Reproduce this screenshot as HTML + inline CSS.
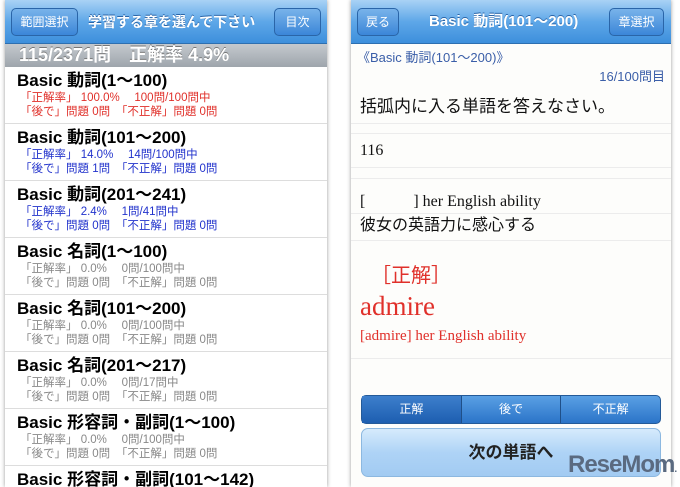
<!DOCTYPE html><html><head><meta charset="utf-8"><style>
*{margin:0;padding:0;box-sizing:border-box}
body{width:680px;height:487px;background:#fff;position:relative;overflow:hidden;font-family:"Liberation Sans","Noto Sans CJK JP",sans-serif}
.p{position:absolute;top:0;height:487px;background:#fff;overflow:hidden;box-shadow:0 0 4px #999}
.hd{position:absolute;left:0;right:0;top:0;height:44px;background:linear-gradient(#a9d2f5,#5ea7e8 50%,#3d8fdc);border-bottom:1px solid #2d6fb0}
.btn{position:absolute;top:8px;height:28px;border:1px solid #2a65a8;border-radius:5px;background:linear-gradient(#78b3ea,#3b86d8);color:#fff;font-size:12px;line-height:26px;text-align:center}
.ht{position:absolute;top:0;line-height:44px;color:#fff;font-weight:bold;font-size:15px;text-shadow:0 -1px 0 #2a65a8}
.st{position:absolute;left:0;right:0;top:44px;height:23px;background:linear-gradient(#c4c9ce,#9ea5ac);color:#fff;font-weight:bold;font-size:18px;line-height:23px;padding-left:14px;text-shadow:0 -1px #777}
.r{position:absolute;left:0;right:0;height:57px;border-bottom:1px solid #ddd;padding-left:12px;overflow:hidden}
.r b{display:block;font-size:17px;margin-top:3px;line-height:21px;color:#000}
.r i{display:block;font-style:normal;font-size:11.5px;line-height:14px;padding-left:3px;white-space:nowrap}
.red{color:#e0302a}.blu{color:#2233cc}.gr{color:#888}
.ln{position:absolute;left:0;right:0;border-top:1px solid #ececec}
.ser{font-family:"Liberation Serif","Noto Serif CJK SC",serif}
</style></head><body>
<div class="p" style="left:5px;width:322px">
<div class="hd"></div>
<div class="btn" style="left:6px;width:67px">範囲選択</div>
<div class="ht" style="left:83px;font-size:14px">学習する章を選んで下さい</div>
<div class="btn" style="left:269px;width:47px">目次</div>
<div class="st">115/2371問　正解率 4.9%</div>
<div class="r" style="top:67px"><b>Basic 動詞(1〜100)</b><i class="red">「正解率」 100.0%　 100問/100問中</i><i class="red">「後で」問題 0問　「不正解」問題 0問</i></div>
<div class="r" style="top:124px"><b>Basic 動詞(101〜200)</b><i class="blu">「正解率」 14.0%　 14問/100問中</i><i class="blu">「後で」問題 1問　「不正解」問題 0問</i></div>
<div class="r" style="top:181px"><b>Basic 動詞(201〜241)</b><i class="blu">「正解率」 2.4%　 1問/41問中</i><i class="blu">「後で」問題 0問　「不正解」問題 0問</i></div>
<div class="r" style="top:238px"><b>Basic 名詞(1〜100)</b><i class="gr">「正解率」 0.0%　 0問/100問中</i><i class="gr">「後で」問題 0問　「不正解」問題 0問</i></div>
<div class="r" style="top:295px"><b>Basic 名詞(101〜200)</b><i class="gr">「正解率」 0.0%　 0問/100問中</i><i class="gr">「後で」問題 0問　「不正解」問題 0問</i></div>
<div class="r" style="top:352px"><b>Basic 名詞(201〜217)</b><i class="gr">「正解率」 0.0%　 0問/17問中</i><i class="gr">「後で」問題 0問　「不正解」問題 0問</i></div>
<div class="r" style="top:409px"><b>Basic 形容詞・副詞(1〜100)</b><i class="gr">「正解率」 0.0%　 0問/100問中</i><i class="gr">「後で」問題 0問　「不正解」問題 0問</i></div>
<div class="r" style="top:466px"><b>Basic 形容詞・副詞(101〜142)</b></div>
</div>
<div class="p" style="left:351px;width:320px;background:#fdfdfb">
<div class="hd"></div>
<div class="btn" style="left:6px;width:42px">戻る</div>
<div class="ht" style="left:78px">Basic 動詞(101〜200)</div>
<div class="btn" style="left:258px;width:55px">章選択</div>
<div style="position:absolute;left:6px;top:47px;font-size:13px;color:#3a5ea8">《Basic 動詞(101〜200)》</div>
<div style="position:absolute;right:6px;top:66px;font-size:13px;color:#3a5ea8">16/100問目</div>
<div class="ln" style="top:123px"></div><div class="ln" style="top:133px"></div><div class="ln" style="top:167px"></div><div class="ln" style="top:178px"></div><div class="ln" style="top:213px"></div><div class="ln" style="top:240px"></div><div class="ln" style="top:358px"></div>
<div style="position:absolute;left:9px;top:92px;font-size:17px;color:#111">括弧内に入る単語を答えなさい。</div>
<div class="ser" style="position:absolute;left:9px;top:142px;font-size:16px;color:#111">116</div>
<div class="ser" style="position:absolute;left:9px;top:188px;font-size:16px;color:#111">[　　　] her English ability</div>
<div style="position:absolute;left:9px;top:211px;font-size:16px;color:#111">彼女の英語力に感心する</div>
<div style="position:absolute;left:20px;top:259px;font-size:20px;color:#e0302a">［正解］</div>
<div class="ser" style="position:absolute;left:9px;top:291px;font-size:27px;color:#e0302a">admire</div>
<div class="ser" style="position:absolute;left:9px;top:328px;font-size:15px;color:#e0302a">[admire] her English ability</div>
<div style="position:absolute;left:10px;top:395px;width:300px;height:29px;border:1px solid #245a98;border-radius:5px;background:linear-gradient(#5aa0e4,#2b74c8);display:flex;color:#fff;font-size:12px;line-height:27px;text-align:center">
<div style="flex:1;border-right:1px solid #1f4f88;background:linear-gradient(#3d7fcc,#1d5eb0)">正解</div><div style="flex:1;border-right:1px solid #1f4f88">後で</div><div style="flex:1">不正解</div></div>
<div style="position:absolute;left:10px;top:428px;width:300px;height:49px;border:1px solid #8cb8e0;border-radius:7px;background:linear-gradient(#d6ebfc,#aed3f6 50%,#a2cbf2);text-align:center;font-size:17px;font-weight:bold;line-height:48px;color:#222">次の単語へ</div>
</div>
<div style="position:absolute;left:568px;top:451px;font-size:24px;font-weight:bold;color:#5a6a80;letter-spacing:-1px">ReseMom<span style="font-size:10px">.</span></div>
</body></html>
